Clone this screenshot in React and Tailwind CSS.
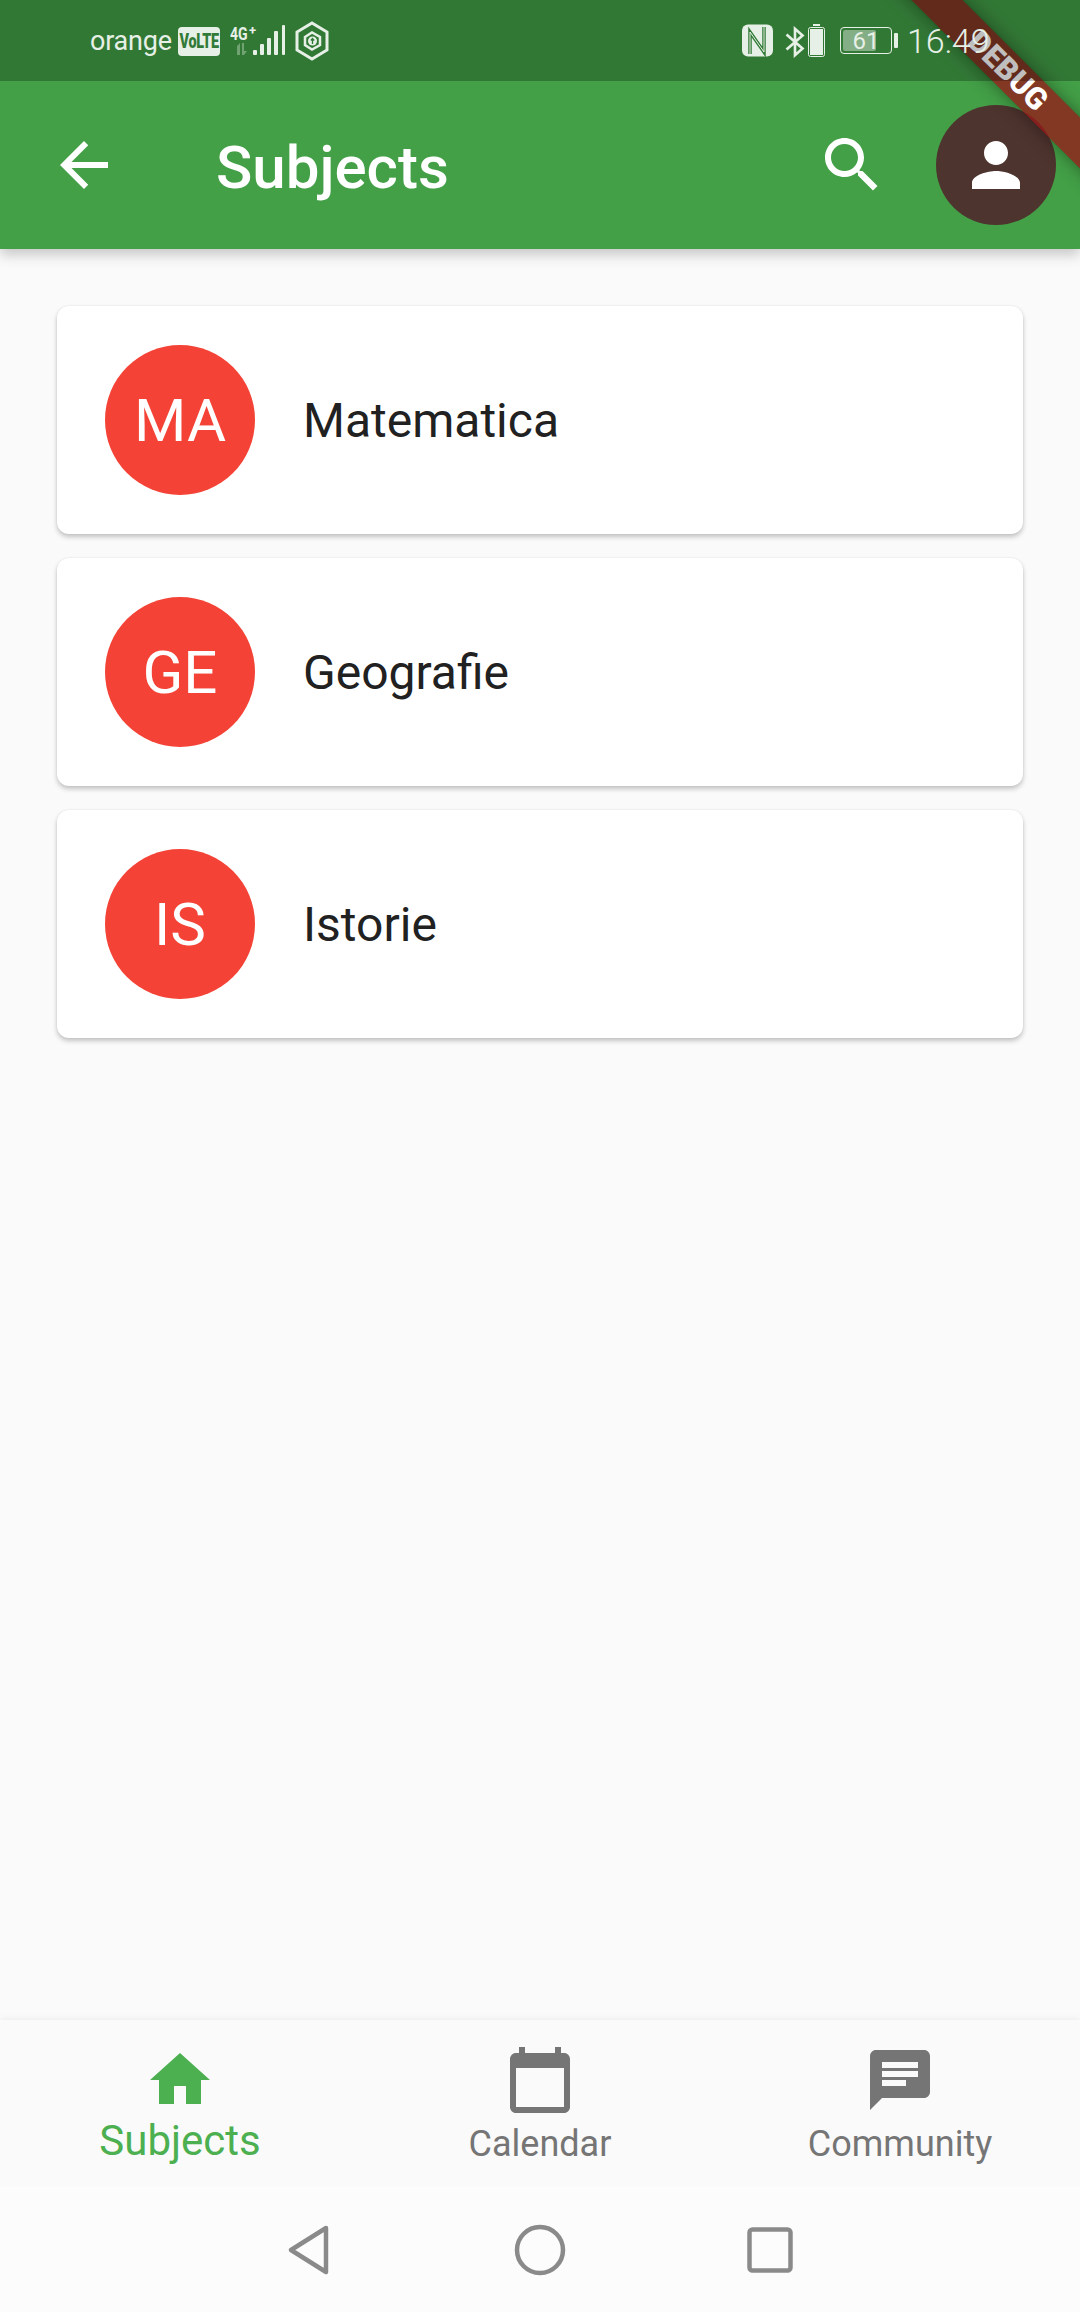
import React from "react";

const Mat = ({ d, className }) => (
  <svg viewBox="0 0 24 24" className={className} fill="currentColor"><path d={d} /></svg>
);

const subjects = [
  ["MA", "Matematica"],
  ["GE", "Geografie"],
  ["IS", "Istorie"],
];

function StatusLeft() {
  return (
    <div className="flex items-center pl-[90px] text-[#e6f0e6]">
      <span className="text-[27px] leading-none tracking-[-0.2px] w-[88px] mt-[2px]">orange</span>
      <div className="w-[42px] h-[29px] bg-[#e6f0e6] rounded-[4px] flex items-center justify-center overflow-hidden mt-[1px]">
        <span className="text-[20px] font-black leading-none text-[#327a37] scale-x-[0.72] tracking-[-0.5px]">VoLTE</span>
      </div>
      <svg width="60" height="36" viewBox="0 0 60 36" className="ml-[10px] mt-[3px]" fill="currentColor">
        <text x="0" y="16" fontSize="18" fontWeight="700" fontFamily="Roboto" transform="scale(0.78 1)">4G</text>
        <text x="19" y="11" fontSize="13" fontWeight="700" fontFamily="Roboto">+</text>
        <path d="M7 22l3-3v12H7zM12 19h2v8l3 0-3 4h-2z" opacity="0.35" />
        <rect x="23" y="26" width="4" height="5" rx="1" />
        <rect x="30" y="20" width="4" height="11" rx="1" />
        <rect x="37" y="14" width="4" height="17" rx="1" />
        <rect x="44" y="7" width="4" height="24" rx="1" />
        <rect x="52" y="1" width="3" height="30" rx="1" />
      </svg>
      <svg width="34" height="40" viewBox="0 0 34 40" className="ml-[5px]" fill="none" stroke="currentColor" strokeWidth="3">
        <path d="M17 2L32 11V29L17 38L2 29V11Z" />
        <path d="M10 16L17 11.5L25 16V24L17 28.5L10 24Z" strokeWidth="2.5" />
        <circle cx="17.5" cy="20" r="4.5" fill="currentColor" stroke="none" />
        <path d="M17.5 23v-5M15.8 19.5l1.7-2 1.7 2" stroke="#327a37" strokeWidth="1.3" />
      </svg>
    </div>
  );
}

function StatusRight() {
  return (
    <div className="flex items-center absolute left-[742px] top-0 h-[81px] text-[#e6f0e6]">
      <svg width="31" height="33" viewBox="0 0 31 33" className="mt-[-1px]">
        <rect width="31" height="32" y="0.5" rx="6" fill="currentColor" />
        <path d="M8 30V8l14 20V3" fill="none" stroke="#327a37" strokeWidth="3.5" />
        <path d="M8 30V8l14 20V3" fill="none" stroke="#e6f0e6" strokeWidth="1" />
      </svg>
      <svg width="26" height="32" viewBox="0 0 24 34" className="ml-[9px] mt-[2px]" fill="none" stroke="currentColor" strokeWidth="2.8">
        <path d="M3 9l17 15-8 7V3l8 7L3 25" />
      </svg>
      <svg width="17" height="33" viewBox="0 0 17 33" className="mt-[-1px]">
        <rect x="5" y="0" width="7" height="2" fill="currentColor" />
        <rect x="0.5" y="3.5" width="16" height="29" rx="2" fill="none" stroke="currentColor" />
        <rect x="2" y="5" width="13" height="26" fill="currentColor" />
      </svg>
      <div className="ml-[15px] relative w-[52px] h-[27px] rounded-[4px] border border-[#e6f0e6] overflow-hidden">
        <div className="absolute left-[2px] top-[2px] bottom-[2px] w-[33px] bg-white/40 rounded-[2px]" />
        <span className="absolute inset-0 flex items-center justify-center text-[24px] leading-none">61</span>
      </div>
      <div className="ml-[2px] w-[4px] h-[15px] bg-[#e6f0e6] rounded-[1px]" />
      <span className="ml-[9px] text-[34px] leading-none font-light mt-[1px]">16:49</span>
    </div>
  );
}

export default function App() {
  return (
    <div className="relative w-[1080px] h-[2312px] overflow-hidden flex flex-col bg-[#fafafa]" style={{ fontFamily: "Roboto, sans-serif" }}>
      <header className="h-[249px] bg-[#43a047] shadow-[0_6px_12px_rgba(0,0,0,0.2)] flex flex-col shrink-0">
        <div className="relative z-20 h-[81px] bg-black/25 flex items-center shrink-0">
          <StatusLeft />
          <StatusRight />
        </div>
        <div className="flex-1 flex items-center text-white pl-[48px] pr-[24px]">
          <Mat className="w-[72px] h-[72px]" d="M20 11H7.83l5.59-5.59L12 4l-8 8 8 8 1.41-1.41L7.83 13H20v-2z" />
          <h1 className="ml-[96px] mt-[6px] text-[60px] leading-none font-medium">Subjects</h1>
          <Mat className="w-[72px] h-[72px] ml-auto" d="M15.5 14h-.79l-.28-.27C15.41 12.59 16 11.11 16 9.5 16 5.91 13.09 3 9.5 3S3 5.91 3 9.5 5.91 16 9.5 16c1.61 0 3.09-.59 4.23-1.57l.27.28v.79l5 4.99L20.49 19l-4.99-5zm-6 0C7.01 14 5 11.99 5 9.5S7.01 5 9.5 5 14 7.01 14 9.5 11.99 14 9.5 14z" />
          <div className="ml-[48px] w-[120px] h-[120px] rounded-full bg-[#4e342e] flex items-center justify-center">
            <Mat className="w-[72px] h-[72px]" d="M12 12c2.21 0 4-1.79 4-4s-1.79-4-4-4-4 1.79-4 4 1.79 4 4 4zm0 2c-2.67 0-8 1.34-8 4v2h16v-2c0-2.66-5.33-4-8-4z" />
          </div>
        </div>
      </header>

      <div className="absolute z-10 left-[808px] top-[53px] w-[400px] h-[36px] rotate-45 bg-black/35 shadow-[0_0_18px_rgba(0,0,0,0.4)]">
        <div className="w-full h-full bg-[#b71c1c]/[0.63] flex items-center justify-center">
          <span className="text-[30.6px] leading-none font-black text-white">DEBUG</span>
        </div>
      </div>

      <main className="flex-1 px-[57px] pt-[57px] flex flex-col gap-[24px]">
        {subjects.map(([abbr, name]) => (
          <div key={abbr} className="h-[228px] bg-white rounded-[12px] shadow-[0_3px_5px_rgba(0,0,0,0.22),0_0_2px_rgba(0,0,0,0.08)] flex items-center pl-[48px]">
            <div className="w-[150px] h-[150px] rounded-full bg-[#f44336] flex items-center justify-center text-white text-[60px] leading-none pt-[2px]">{abbr}</div>
            <span className="ml-[48px] mt-[2px] text-[48px] leading-none text-[#212121]">{name}</span>
          </div>
        ))}
      </main>

      <nav className="h-[167px] bg-[#fafafa] shadow-[0_-1px_6px_rgba(0,0,0,0.06)] grid grid-cols-3 pt-[24px] shrink-0">
        <div className="flex flex-col items-center text-[#4caf50]">
          <Mat className="w-[72px] h-[72px]" d="M10 20v-6h4v6h5v-8h3L12 3 2 12h3v8z" />
          <span className="text-[42px] leading-none mt-[4px]">Subjects</span>
        </div>
        <div className="flex flex-col items-center text-[#757575]">
          <Mat className="w-[72px] h-[72px]" d="M20 3h-1V1h-2v2H7V1H5v2H4c-1.1 0-2 .9-2 2v16c0 1.1.9 2 2 2h16c1.1 0 2-.9 2-2V5c0-1.1-.9-2-2-2zm0 18H4V8h16v13z" />
          <span className="text-[36px] leading-none mt-[10px]">Calendar</span>
        </div>
        <div className="flex flex-col items-center text-[#757575]">
          <Mat className="w-[72px] h-[72px]" d="M20 2H4c-1.1 0-1.99.9-1.99 2L2 22l4-4h14c1.1 0 2-.9 2-2V4c0-1.1-.9-2-2-2zM6 9h12v2H6V9zm8 5H6v-2h8v2zm4-6H6V6h12v2z" />
          <span className="text-[36px] leading-none mt-[10px]">Community</span>
        </div>
      </nav>

      <div className="h-[125px] shrink-0 bg-[#fcfcfc] flex items-center justify-center text-[#8a8a8a]">
        <svg width="60" height="60" viewBox="0 0 60 60" className="mr-[170px]" fill="none" stroke="currentColor" strokeWidth="4.5" strokeLinejoin="round">
          <path d="M46 8L11 30l35 22z" />
        </svg>
        <svg width="60" height="60" viewBox="0 0 60 60" fill="none" stroke="currentColor" strokeWidth="4.5">
          <circle cx="30" cy="30" r="23" />
        </svg>
        <svg width="60" height="60" viewBox="0 0 60 60" className="ml-[170px]" fill="none" stroke="currentColor" strokeWidth="4.5">
          <rect x="9.5" y="9.5" width="41" height="41" rx="3" />
        </svg>
      </div>
    </div>
  );
}
